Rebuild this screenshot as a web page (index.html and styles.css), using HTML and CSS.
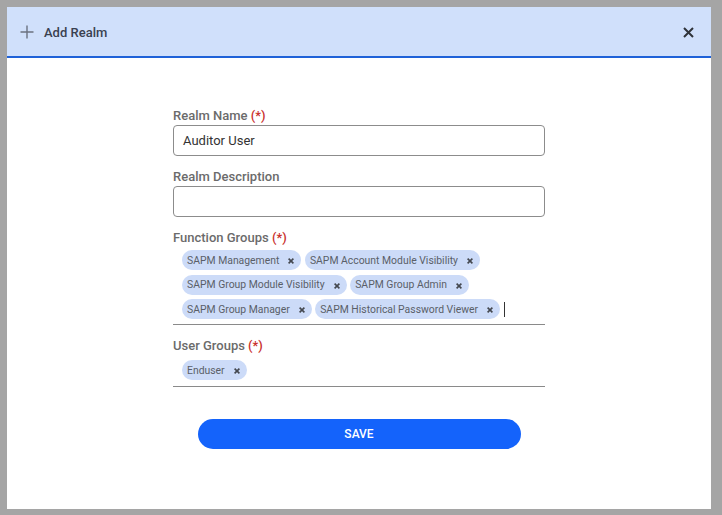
FILE: index.html
```html
<!DOCTYPE html>
<html>
<head>
<meta charset="utf-8">
<link rel="stylesheet" href="styles.css">
</head>
<body>
<div class="modal">
  <div class="modal-header">
    <div class="title">
      <svg class="plus" width="14" height="14" viewBox="0 0 14 14"><path d="M7 0.5V13.5M0.5 7H13.5" stroke="#6b7280" stroke-width="1.4" fill="none"/></svg>
      <span>Add Realm</span>
    </div>
    <svg class="close" width="11" height="11" viewBox="0 0 11 11"><path d="M1 1L10 10M10 1L1 10" stroke="#2f3339" stroke-width="2" fill="none"/></svg>
  </div>
  <div class="modal-body">
    <form class="form">
      <div class="field">
        <label class="label">Realm Name <span class="req">(*)</span></label>
        <div class="input">Auditor User</div>
      </div>
      <div class="field">
        <label class="label">Realm Description</label>
        <div class="input"></div>
      </div>
      <div class="field">
        <label class="label">Function Groups <span class="req">(*)</span></label>
        <div class="chips fg">
          <span class="chip">SAPM Management<svg class="x" width="6" height="6" viewBox="0 0 6 6"><path d="M0.6 0.6L5.4 5.4M5.4 0.6L0.6 5.4"/></svg></span>
          <span class="chip">SAPM Account Module Visibility<svg class="x" width="6" height="6" viewBox="0 0 6 6"><path d="M0.6 0.6L5.4 5.4M5.4 0.6L0.6 5.4"/></svg></span>
          <span class="chip">SAPM Group Module Visibility<svg class="x" width="6" height="6" viewBox="0 0 6 6"><path d="M0.6 0.6L5.4 5.4M5.4 0.6L0.6 5.4"/></svg></span>
          <span class="chip">SAPM Group Admin<svg class="x" width="6" height="6" viewBox="0 0 6 6"><path d="M0.6 0.6L5.4 5.4M5.4 0.6L0.6 5.4"/></svg></span>
          <span class="chip">SAPM Group Manager<svg class="x" width="6" height="6" viewBox="0 0 6 6"><path d="M0.6 0.6L5.4 5.4M5.4 0.6L0.6 5.4"/></svg></span>
          <span class="chip">SAPM Historical Password Viewer<svg class="x" width="6" height="6" viewBox="0 0 6 6"><path d="M0.6 0.6L5.4 5.4M5.4 0.6L0.6 5.4"/></svg></span>
          <span class="cursor"></span>
        </div>
      </div>
      <div class="field">
        <label class="label">User Groups <span class="req">(*)</span></label>
        <div class="chips ug">
          <span class="chip">Enduser<svg class="x" width="6" height="6" viewBox="0 0 6 6"><path d="M0.6 0.6L5.4 5.4M5.4 0.6L0.6 5.4"/></svg></span>
        </div>
      </div>
      <div class="actions">
        <button type="button" class="save">SAVE</button>
      </div>
    </form>
  </div>
</div>
</body>
</html>
```

FILE: styles.css
```css
html, body {
  margin: 0;
  padding: 0;
  background: #a5a5a5;
  font-family: Roboto, "Liberation Sans", Arial, sans-serif;
}
body {
  padding: 7px 11px 6px 7px;
  height: 515px;
  box-sizing: border-box;
}
.modal {
  background: #fff;
  width: 704px;
  height: 502px;
  display: flex;
  flex-direction: column;
}
.modal-header {
  height: 49px;
  background: #d0e0fb;
  border-bottom: 2px solid #1f62d8;
  display: flex;
  align-items: center;
  justify-content: space-between;
  padding: 0 17px 0 13px;
}
.title {
  display: flex;
  align-items: center;
  gap: 10px;
  font-size: 13px;
  font-weight: 500;
  color: #3a4150;
  padding-top: 1px;
}
.plus { display: block; }
.close { display: block; margin-top: 1px; }
.modal-body {
  flex: 1;
  display: flex;
  justify-content: center;
  padding-top: 50px;
}
.form {
  width: 372px;
  display: flex;
  flex-direction: column;
  gap: 13px;
}
.field {
  display: flex;
  flex-direction: column;
}
.label {
  font-size: 13px;
  line-height: 16px;
  font-weight: 500;
  color: #6b6b6b;
  margin-bottom: 1px;
}
.req { color: #c9302c; }
.input {
  height: 31px;
  box-sizing: border-box;
  border: 1px solid #8c8c8c;
  border-radius: 4px;
  padding: 0 9px;
  font-size: 13px;
  line-height: 29px;
  color: #333;
}
.chips {
  display: flex;
  flex-wrap: wrap;
  align-items: center;
  gap: 4.5px 3.5px;
  padding: 3px 0 5px 9px;
  border-bottom: 1px solid #8a8a8a;
}
.chips.ug { padding-top: 5px; padding-bottom: 6px; }
.field.ug-field { margin-top: -1px; }
.chip {
  display: inline-flex;
  align-items: center;
  height: 20px;
  border-radius: 10px;
  background: #ccdbf8;
  padding: 0 7px 0 5px;
  font-size: 10.4px;
  color: #5a5f68;
  white-space: nowrap;
}
.x {
  display: block;
  margin-left: 9px;
  margin-top: 2px;
  stroke: #44484f;
  stroke-width: 1.6;
  fill: none;
}
.cursor {
  display: inline-block;
  width: 1px;
  height: 15px;
  background: #333;
  margin-left: 0;
}
.actions {
  display: flex;
  justify-content: center;
  padding-top: 19px;
}
.save {
  width: 323px;
  height: 30px;
  border: none;
  border-radius: 15px;
  background: #1463fb;
  color: #fff;
  font-family: Roboto, "Liberation Sans", Arial, sans-serif;
  font-size: 12px;
  font-weight: 500;
  cursor: pointer;
}
```
